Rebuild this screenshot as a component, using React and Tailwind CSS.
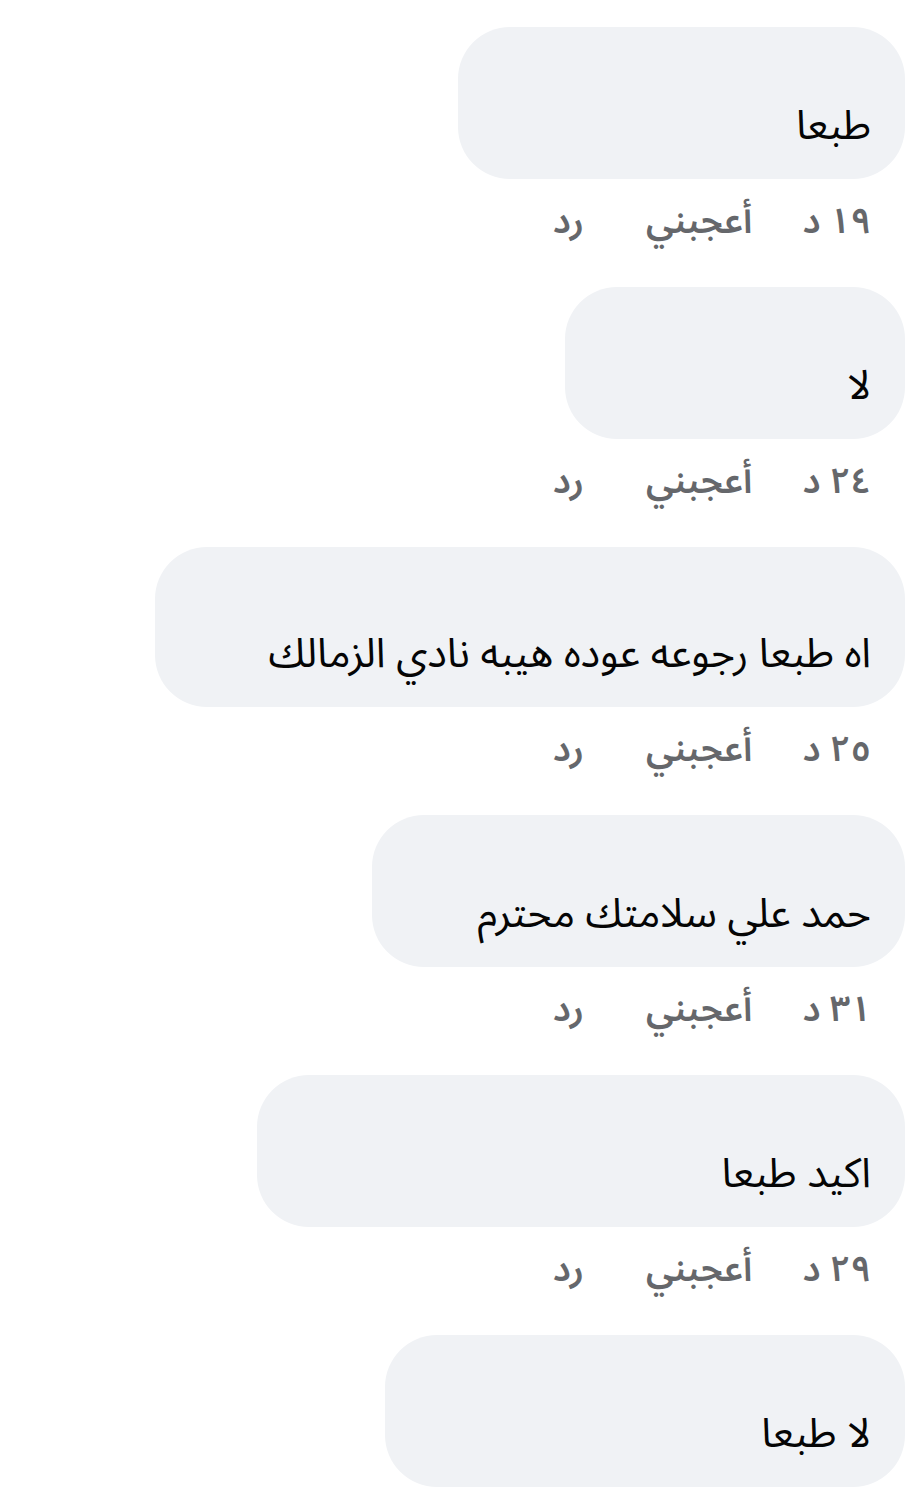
const comments = [
  { text: 'طبعا', time: '١٩ د', width: 'w-[447px]', height: 'h-[152px]' },
  { text: 'لا', time: '٢٤ د', width: 'w-[340px]', height: 'h-[152px]' },
  { text: 'اه طبعا رجوعه عوده هيبه نادي الزمالك', time: '٢٥ د', width: 'w-[750px]', height: 'h-[160px]' },
  { text: 'حمد علي سلامتك محترم', time: '٣١ د', width: 'w-[533px]', height: 'h-[152px]' },
  { text: 'اكيد طبعا', time: '٢٩ د', width: 'w-[648px]', height: 'h-[152px]' },
  { text: 'لا طبعا', time: null, width: 'w-[520px]', height: 'h-[152px]' },
]

function Comment({ c }) {
  return (
    <div className="flex flex-col items-start">
      {/* name is hidden, only the message shows */}
      <div className={`${c.width} ${c.height} rounded-[52px] bg-[#f0f2f5] flex flex-col justify-end pr-[34px] pl-[40px] pb-[26px]`}>
        <div className="text-[41px] leading-[54px] text-[#050505]">{c.text}</div>
      </div>
      {c.time && (
        <div className="flex items-center pr-[34px] mt-[18px] h-[50px] text-[36px] font-semibold text-[#65676b]">
          <span className="ml-[50px]">{c.time}</span>
          <span className="ml-[62px]">أعجبني</span>
          <span>رد</span>
        </div>
      )}
    </div>
  )
}

export default function App() {
  return (
    <div dir="rtl" className="min-h-[1512px] bg-white pt-[27px] pr-[19px] flex flex-col gap-[40px]"
      style={{ fontFamily: '"Noto Sans Arabic", "DejaVu Sans", sans-serif' }}>
      {comments.map((c, i) => (
        <Comment key={i} c={c} />
      ))}
    </div>
  )
}
